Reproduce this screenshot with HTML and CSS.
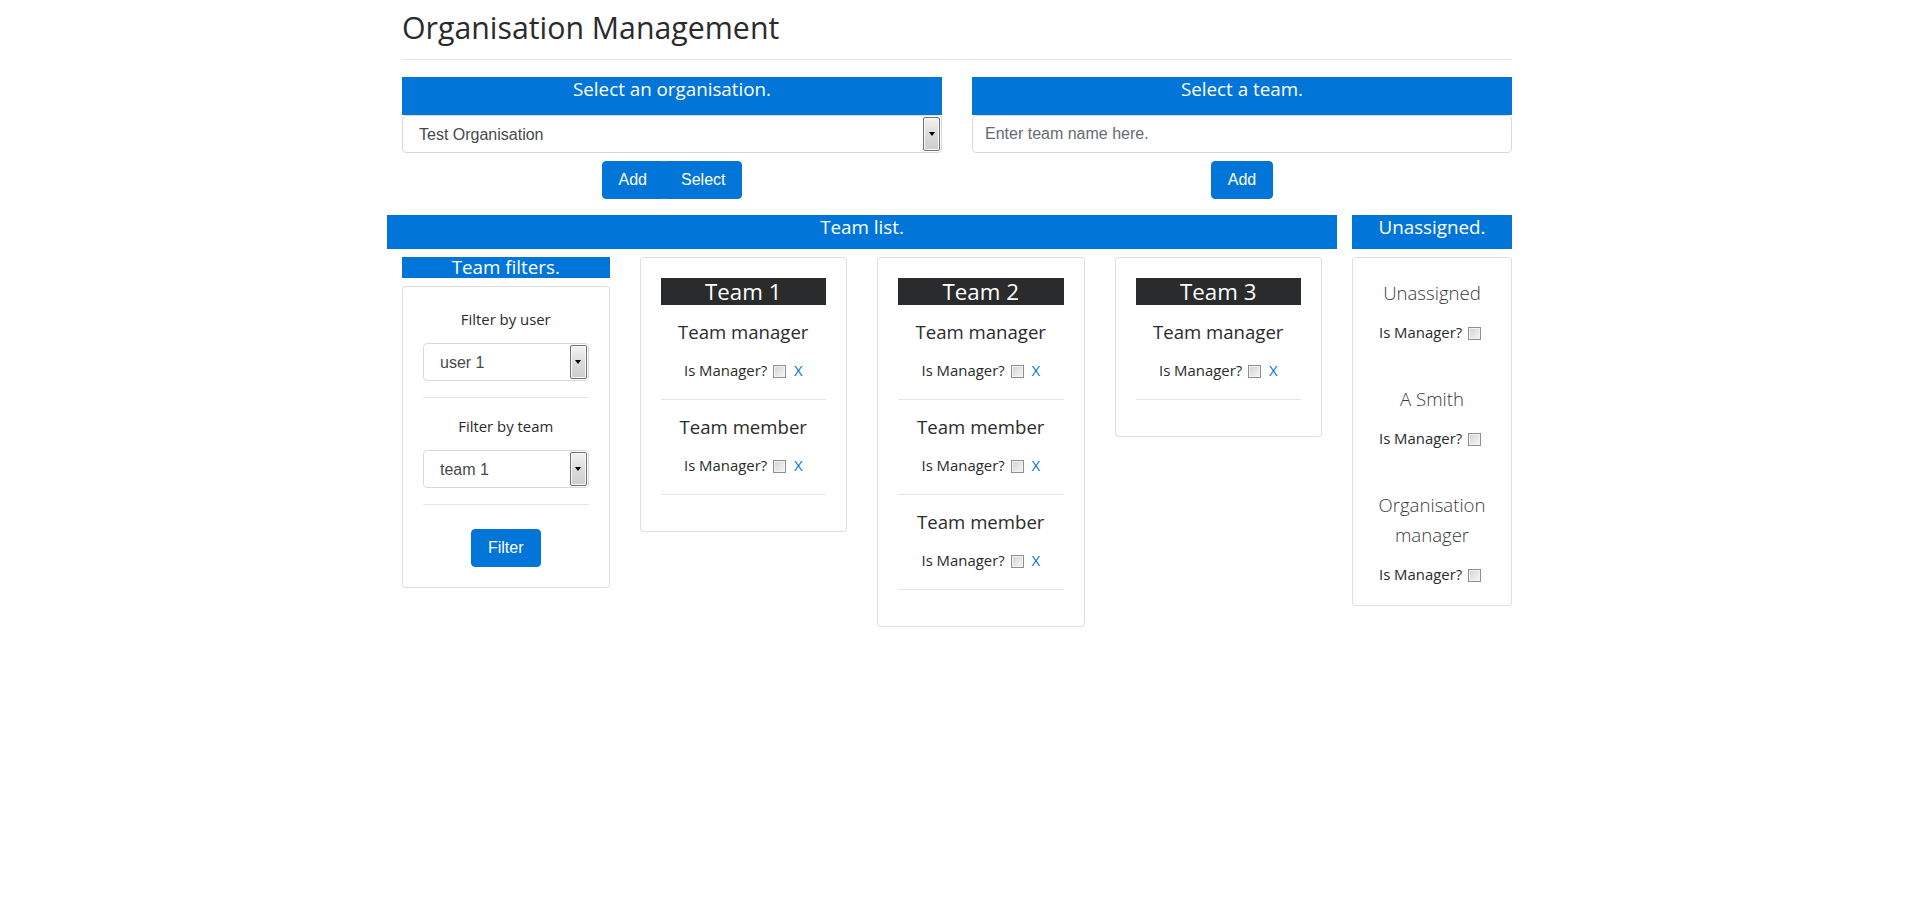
FILE: index.html
```html
<!DOCTYPE html>
<html lang="en">
<head>
<meta charset="utf-8">
<title>Organisation Management</title>
<link rel="stylesheet" href="styles.css">
</head>
<body>
<div class="container">
  <header class="page-header">
    <h1 class="title">Organisation Management</h1>
  </header>

  <div class="top-row">
    <section class="picker">
      <div class="bar bar-lg">Select an organisation.</div>
      <div class="select">
        <select class="select-native"><option>Test Organisation</option></select>
        <span class="select-arrow"><span class="caret"></span></span>
      </div>
      <div class="actions">
        <div class="btn-group">
          <button class="btn">Add</button><button class="btn">Select</button>
        </div>
      </div>
    </section>
    <section class="picker">
      <div class="bar bar-lg">Select a team.</div>
      <input class="text-input" type="text" placeholder="Enter team name here.">
      <div class="actions">
        <button class="btn">Add</button>
      </div>
    </section>
  </div>

  <div class="main-row">
    <div class="col-teams">
      <div class="bar bar-md">Team list.</div>
      <div class="team-grid">
        <div class="filters">
          <div class="bar bar-sm">Team filters.</div>
          <div class="card">
            <div class="field-label">Filter by user</div>
            <div class="select">
              <select class="select-native"><option>user 1</option></select>
              <span class="select-arrow"><span class="caret"></span></span>
            </div>
            <hr class="divider">
            <div class="field-label">Filter by team</div>
            <div class="select">
              <select class="select-native"><option>team 1</option></select>
              <span class="select-arrow"><span class="caret"></span></span>
            </div>
            <hr class="divider">
            <button class="btn btn-filter">Filter</button>
          </div>
        </div>

        <div class="card">
          <div class="team-title">Team 1</div>
          <div class="member-name">Team manager</div>
          <div class="is-manager">Is Manager? <input class="check" type="checkbox"> <a class="remove" href="#">X</a></div>
          <hr class="divider">
          <div class="member-name">Team member</div>
          <div class="is-manager">Is Manager? <input class="check" type="checkbox"> <a class="remove" href="#">X</a></div>
          <hr class="divider">
        </div>

        <div class="card">
          <div class="team-title">Team 2</div>
          <div class="member-name">Team manager</div>
          <div class="is-manager">Is Manager? <input class="check" type="checkbox"> <a class="remove" href="#">X</a></div>
          <hr class="divider">
          <div class="member-name">Team member</div>
          <div class="is-manager">Is Manager? <input class="check" type="checkbox"> <a class="remove" href="#">X</a></div>
          <hr class="divider">
          <div class="member-name">Team member</div>
          <div class="is-manager">Is Manager? <input class="check" type="checkbox"> <a class="remove" href="#">X</a></div>
          <hr class="divider">
        </div>

        <div class="card">
          <div class="team-title">Team 3</div>
          <div class="member-name">Team manager</div>
          <div class="is-manager">Is Manager? <input class="check" type="checkbox"> <a class="remove" href="#">X</a></div>
          <hr class="divider">
        </div>
      </div>
    </div>

    <div class="col-unassigned">
      <div class="bar bar-md">Unassigned.</div>
      <div class="card">
        <div class="user">
          <div class="user-name">Unassigned</div>
          <div class="user-manager">Is Manager? <input class="check" type="checkbox"></div>
        </div>
        <div class="user">
          <div class="user-name">A Smith</div>
          <div class="user-manager">Is Manager? <input class="check" type="checkbox"></div>
        </div>
        <div class="user">
          <div class="user-name">Organisation manager</div>
          <div class="user-manager">Is Manager? <input class="check" type="checkbox"></div>
        </div>
      </div>
    </div>
  </div>
</div>
</body>
</html>
```

FILE: styles.css
```css
* { box-sizing: border-box; }

html, body {
  margin: 0;
  background: #fff;
}

body {
  padding-left: 8px;
  font-family: "Open Sans", "Noto Sans", sans-serif;
  font-size: 14.9px;
  line-height: 22px;
  color: #292b2c;
}

.container {
  max-width: 1110px;
  margin: 0 auto;
}

/* header */
.page-header {
  padding-top: 10px;
  padding-bottom: 13px;
  border-bottom: 1px solid #e6e6e6;
  margin-bottom: 17px;
}

.title {
  margin: 0;
  font-size: 30.3px;
  line-height: 36px;
  font-weight: 400;
  color: #292b2c;
}

/* blue bars */
.bar {
  background: #0275d8;
  color: #fff;
  text-align: center;
  font-size: 18.8px;
  line-height: 24px;
}

.bar-lg { padding-bottom: 14px; }
.bar-md { padding-bottom: 10px; }
.bar-sm {
  line-height: 21px;
  margin-bottom: 8px;
}

/* top pickers */
.top-row {
  display: grid;
  grid-template-columns: 1fr 1fr;
  column-gap: 30px;
  margin-bottom: 16px;
}

.picker {
  display: flex;
  flex-direction: column;
}

.actions {
  display: flex;
  justify-content: center;
  margin-top: 8px;
}

.btn {
  font-family: "Liberation Sans", Arial, sans-serif;
  font-size: 16px;
  line-height: 20px;
  padding: 8px 16px;
  color: #fff;
  background: #0275d8;
  border: 1px solid #0275d8;
  border-radius: 4px;
  cursor: pointer;
}

.btn-group {
  display: inline-flex;
}

.btn-group .btn:first-child {
  border-top-right-radius: 0;
  border-bottom-right-radius: 0;
}

.btn-group .btn:last-child {
  border-top-left-radius: 0;
  border-bottom-left-radius: 0;
}

/* selects */
.select {
  display: flex;
  align-items: stretch;
  height: 38px;
  border: 1px solid #d9d9d9;
  border-radius: 4px;
  background: #fff;
  padding: 1px 1px 1px 0;
}

.select-native {
  flex: 1;
  min-width: 0;
  appearance: none;
  -webkit-appearance: none;
  border: 0;
  background: transparent;
  padding: 0 0 0 16px;
  font-family: "Liberation Sans", Arial, sans-serif;
  font-size: 16px;
  color: #464a4c;
  outline: none;
}

.select-arrow {
  width: 17px;
  display: flex;
  align-items: center;
  justify-content: center;
  border: 1px solid #707070;
  border-radius: 2px;
  background: linear-gradient(#f3f3f3, #dcdcdc 50%, #cdcdcd);
  box-shadow: inset 0 0 0 1px #fafafa;
}

.caret {
  width: 0;
  height: 0;
  border-left: 3.5px solid transparent;
  border-right: 3.5px solid transparent;
  border-top: 4px solid #000;
}

.text-input {
  height: 38px;
  border: 1px solid #d9d9d9;
  border-radius: 4px;
  padding: 8px 12px;
  font-family: "Liberation Sans", Arial, sans-serif;
  font-size: 16px;
  line-height: 20px;
  color: #464a4c;
}

.text-input::placeholder {
  color: #636c72;
}

/* main area */
.main-row {
  display: grid;
  grid-template-columns: 5fr 1fr;
  margin: 0 -15px;
  align-items: start;
}

.col-teams .bar { margin-bottom: 8px; }

.team-grid {
  display: grid;
  grid-template-columns: repeat(4, 1fr);
  column-gap: 30px;
  padding: 0 15px;
  align-items: start;
}

.col-unassigned {
  padding: 0 15px;
}

.col-unassigned .bar-md { margin-bottom: 8px; }

.card {
  border: 1px solid rgba(0, 0, 0, 0.125);
  border-radius: 4px;
  padding: 20px;
  text-align: center;
  background: #fff;
}

.divider {
  margin: 16px 0;
  border: 0;
  border-top: 1px solid rgba(0, 0, 0, 0.1);
  height: 0;
}

/* filters */
.field-label {
  line-height: 24px;
  margin-bottom: 12px;
}

.filters .select { text-align: left; }

.btn-filter {
  margin-top: 8px;
}

/* teams */
.team-title {
  background: #292b2c;
  color: #fff;
  font-size: 22.3px;
  line-height: 27px;
  margin-bottom: 16px;
}

.member-name {
  font-size: 18.6px;
  line-height: 22px;
  margin-bottom: 16px;
}

.is-manager {
  line-height: 22px;
  padding-bottom: 2px;
}

.check {
  appearance: none;
  -webkit-appearance: none;
  width: 13px;
  height: 13px;
  margin: 0 4px 0 2px;
  vertical-align: -2px;
  border: 1px solid #8f8f8f;
  background: linear-gradient(135deg, #d2d2d2, #f7f7f7);
  box-shadow: inset 0 0 0 1px #f2f2f2;
}

.remove {
  color: #0275d8;
  text-decoration: none;
}

/* unassigned */
.user { margin-bottom: 41px; }
.user:last-child { margin-bottom: 0; }

.user-name {
  font-size: 18.6px;
  font-weight: 300;
  line-height: 30px;
  margin-bottom: 13px;
  color: #373a3c;
}

.user-manager {
  line-height: 22px;
}
```
